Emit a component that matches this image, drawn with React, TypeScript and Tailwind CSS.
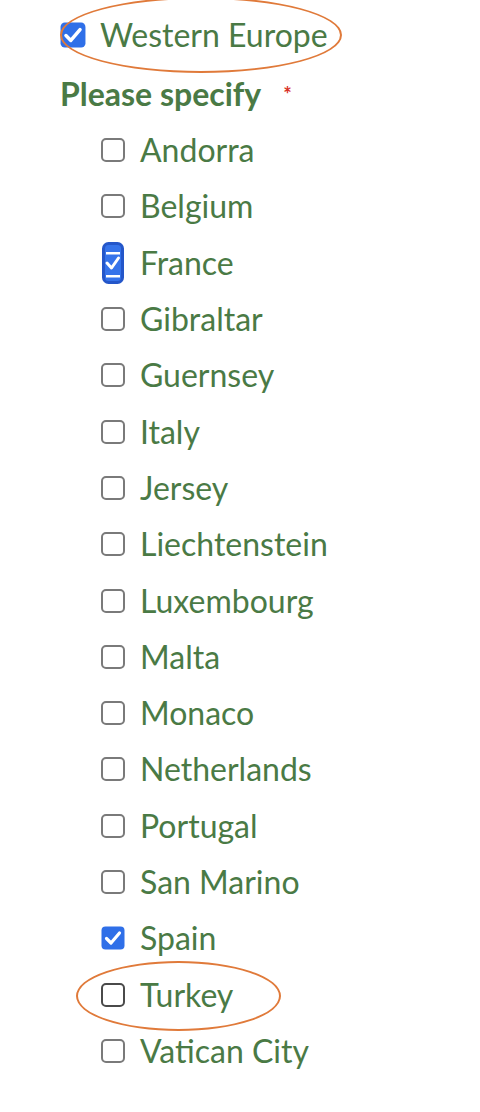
const countries = [
  { name: "Andorra", checked: false },
  { name: "Belgium", checked: false },
  { name: "France", checked: true, focused: true },
  { name: "Gibraltar", checked: false },
  { name: "Guernsey", checked: false },
  { name: "Italy", checked: false },
  { name: "Jersey", checked: false },
  { name: "Liechtenstein", checked: false },
  { name: "Luxembourg", checked: false },
  { name: "Malta", checked: false },
  { name: "Monaco", checked: false },
  { name: "Netherlands", checked: false },
  { name: "Portugal", checked: false },
  { name: "San Marino", checked: false },
  { name: "Spain", checked: true },
  { name: "Turkey", checked: false, circled: true },
  { name: "Vatican City", checked: false },
]

function Checked({ size = 24 }: { size?: number }) {
  return (
    <svg width={size} height={size} viewBox="0 0 24 24" className="shrink-0">
      <rect x="0.5" y="0.5" width="23" height="23" rx="4" fill="#2f6fe8" />
      <path d="M5.5 12.5 L10 17 L18.5 7" fill="none" stroke="#fff" strokeWidth="3.2" strokeLinecap="round" strokeLinejoin="round" />
    </svg>
  )
}

function FocusedChecked() {
  return (
    <svg width="22" height="42" viewBox="0 0 22 42" className="shrink-0">
      <rect x="1.5" y="1.5" width="19" height="39" rx="5" fill="#3573ea" stroke="#2456c9" strokeWidth="3" />
      <rect x="4" y="10" width="14" height="2.5" fill="#fff" />
      <rect x="4" y="33" width="14" height="2.5" fill="#fff" />
      <path d="M5 21 L9.5 26 L16.5 16" fill="none" stroke="#fff" strokeWidth="3" strokeLinecap="round" strokeLinejoin="round" />
    </svg>
  )
}

function Unchecked({ dark }: { dark?: boolean }) {
  return (
    <span
      className={
        dark
          ? "w-6 h-6 shrink-0 rounded-[5px] border-2 border-[#4a4a4a] bg-white"
          : "w-6 h-6 shrink-0 rounded-[5px] border-2 border-[#7a7a7a] bg-white"
      }
    />
  )
}

export default function App() {
  return (
    <div
      className="relative w-[480px] h-[1112px] bg-white overflow-hidden text-[#4a7a45]"
      style={{ fontFamily: "Lato, 'Open Sans', sans-serif" }}
    >
      <div className="pt-[23px] pl-[60px]">
        <div className="flex items-center gap-[14px] h-6">
          <Checked size={26} />
          <span className="text-[32px] leading-none">Western Europe</span>
        </div>

        <div className="flex items-start mt-[31px] h-8">
          <span className="text-[32px] font-bold leading-none">Please specify</span>
          <span className="ml-[22px] mt-[6px] text-[#d93025] text-[20px] font-bold leading-none">*</span>
        </div>

        <ul className="mt-[12px] pl-[41px] flex flex-col">
          {countries.map(c => (
            <li key={c.name} className="relative flex items-center h-[56.3px] gap-[15px]">
              <span className="w-6 flex justify-center">
                {c.focused ? <FocusedChecked /> : c.checked ? <Checked /> : <Unchecked dark={c.circled} />}
              </span>
              <span className="text-[32px] leading-none">{c.name}</span>
              {c.circled && (
                <span className="absolute left-[-25px] top-[-5px] w-[205px] h-[70px] rounded-[50%] border-2 border-[#e07a3a]" />
              )}
            </li>
          ))}
        </ul>
      </div>

      <span className="absolute left-[60px] top-[-3px] w-[282px] h-[76px] rounded-[50%] border-2 border-[#e07a3a]" />
    </div>
  )
}
